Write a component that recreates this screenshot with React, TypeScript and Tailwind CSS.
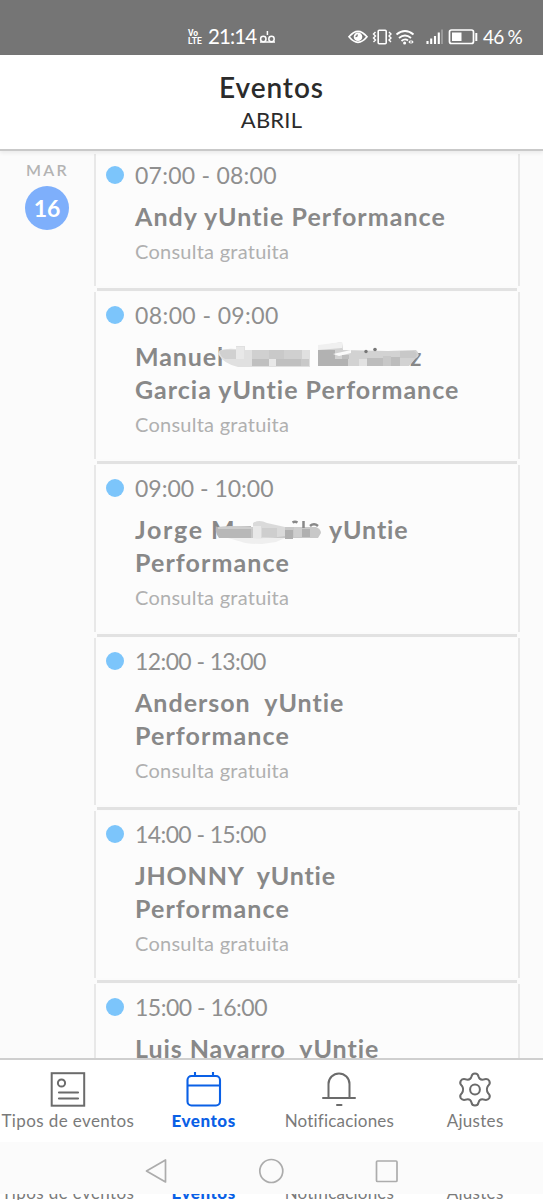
import React from 'react';

function Smudge({ kind }: { kind: 'wide' | 'narrow' }) {
  if (kind === 'wide') {
    return (
      <svg className="absolute left-[218px] top-[24px]" width="210" height="50" viewBox="218 322 210 50">
        <path d="M219 348h6l-1 18h82v-16z" fill="#fcfcfc" />
        <path d="M219 351q6-3 17-2v-3h9v4h65v17h-72q-14-3-20-13z" fill="#e0e0e0" />
        <path d="M219 351q6-2 17-1v9h-11q-5-3-6-8z" fill="#d0d0d0" />
        <path d="M236 347h8v12h-8zM269 359h7v7h-7z" fill="#e8e8e8" />
        <path d="M252 350h17v9h-17zM284 350h18v9h-18z" fill="#d0d0d0" />
        <path d="M252 359h17v7h-17zM276 359h25v7h-25z" fill="#c0c0c0" />
        <path d="M301 359h8v7h-8zM269 350h15v9h-15z" fill="#c9c9c9" />
        <path d="M318 346l24-4 1 8 45 1 28-1q6 5-1 9l-6 7h-91z" fill="#d2d2d2" />
        <path d="M318 345l24-3v6l-24 2z" fill="#f0f0f0" />
        <path d="M318 350h17v9h-17zM318 359h30v7h-30z" fill="#b2b2b2" />
        <path d="M333 354l18-4v3l-12 3z" fill="#fafafa" />
        <path d="M359 359h8v7h-8z" fill="#e2e2e2" />
        <path d="M342 355h7v4h-7zM367 358h16v8h-16zM391 357h9v9h-9z" fill="#bdbdbd" />
        <path d="M383 356h8v10h-8zM400 351h14q5 3 1 7h-15z" fill="#c8c8c8" />
        <circle cx="366" cy="351.5" r="1.7" fill="#777" />
        <circle cx="375" cy="349.5" r="1.8" fill="#777" />
      </svg>
    );
  }
  return (
    <svg className="absolute left-[210px] top-[24px]" width="120" height="50" viewBox="210 495 120 50">
      <path d="M217 528h36v13h-36z" fill="#fcfcfc" />
      <path d="M222 527h94q5 2 5 6l-3 5H222z" fill="#c8c8c8" />
      <path d="M216 527l35-1v12h-32q-4-5-3-11z" fill="#b8b8b8" />
      <path d="M218 527l12-1 23 1v2h-35z" fill="#cdcdcd" />
      <path d="M228 538h57l-9 4-14 2q-16 0-20-2z" fill="#efefef" />
      <path d="M253 523q6-4 14 0l18 4v9q-20 3-32 2z" fill="#dadada" />
      <path d="M253 526h8v12h-8z" fill="#e8e8e8" />
      <path d="M262 528h15v9h-15zM294 527h8v10h-8z" fill="#cecece" />
      <path d="M285 530h8v9h-8zM302 529h8v8h-8z" fill="#b0b0b0" />
      <path d="M292.500 522.500q2.500-1.500 5 0M303.500 521v7M310 526q4-3.500 8 0" fill="none" stroke="#888" strokeWidth="2.500" />
    </svg>
  );
}

type EventItem = {
  time: string;
  timeCls: string;
  lines: { text: React.ReactNode; cls: string }[];
  smudge?: 'wide' | 'narrow';
};

const events: EventItem[] = [
  { time: '07:00 - 08:00', timeCls: 'tracking-[0.25px]', lines: [{ text: 'Andy yUntie Performance', cls: 'tracking-[1.05px]' }] },
  {
    time: '08:00 - 09:00',
    timeCls: 'tracking-[0.4px]',
    lines: [
      { text: <><span className="inline-block w-[275px]">Manuel</span>z</>, cls: 'tracking-[0.9px]' },
      { text: 'Garcia yUntie Performance', cls: 'tracking-[1px]' },
    ],
    smudge: 'wide',
  },
  {
    time: '09:00 - 10:00',
    timeCls: 'tracking-[0px]',
    lines: [
      {
        text: (
          <>
            <span className="inline-block w-[76px] tracking-[1.7px]">Jorge</span>
            <span className="inline-block w-[118px]">M</span>yUntie
          </>
        ),
        cls: 'tracking-[0.9px]',
      },
      { text: 'Performance', cls: 'tracking-[1.1px]' },
    ],
    smudge: 'narrow',
  },
  {
    time: '12:00 - 13:00',
    timeCls: 'tracking-[-0.6px]',
    lines: [
      { text: 'Anderson  yUntie', cls: 'tracking-[1px]' },
      { text: 'Performance', cls: 'tracking-[1.1px]' },
    ],
  },
  {
    time: '14:00 - 15:00',
    timeCls: 'tracking-[-0.6px]',
    lines: [
      { text: 'JHONNY  yUntie', cls: 'tracking-[0.8px]' },
      { text: 'Performance', cls: 'tracking-[1.1px]' },
    ],
  },
  {
    time: '15:00 - 16:00',
    timeCls: 'tracking-[-0.5px]',
    lines: [{ text: 'Luis Navarro  yUntie', cls: 'tracking-[0.95px]' }],
  },
];

function EventCard({ item, first }: { item: EventItem; first: boolean }) {
  return (
    <div className={first ? 'relative h-[138px] shrink-0 pt-[8px]' : 'relative h-[173px] shrink-0 pt-[10px]'}>
      <div className="absolute top-[3px] bottom-[3px] left-[94px] w-[426px] border-x-2 border-[#e8e8e8] bg-[#fcfcfc]" />
      <div className="absolute -bottom-[2px] left-[97px] h-[3px] w-[420px] bg-[#e2e2e2]" />
      <div className="relative flex h-8 items-center pl-[106px]">
        <span className="mr-[11px] size-[18px] rounded-full bg-[#7cc5fb]" />
        <span className={'whitespace-pre text-[23px] text-[#8f8f8f] ' + item.timeCls}>{item.time}</span>
      </div>
      <div className="relative mt-[9px] pl-[135px] text-[25px] leading-[33px] font-bold text-[#888]">
        {item.lines.map((l, i) => (
          <div key={i} className={'h-[33px] whitespace-pre ' + l.cls}>{l.text}</div>
        ))}
      </div>
      {item.lines.length > 1 || first ? (
        <div className="relative pt-px pl-[135px] text-[20px] leading-[35px] tracking-[0.25px] text-[#b0b0b0]">Consulta gratuita</div>
      ) : null}
      {item.smudge && <div className="absolute top-[9px] left-0"><Smudge kind={item.smudge} /></div>}
    </div>
  );
}

function Labels() {
  return (
    <div className="grid grid-cols-4 text-center text-[17px] leading-6 whitespace-nowrap text-[#7a7a7a]">
      <span className="tracking-[0.4px]">Tipos de eventos</span>
      <span className="font-black tracking-[0.5px] text-[#0a60e6]">Eventos</span>
      <span className="tracking-[0.2px]">Notificaciones</span>
      <span className="tracking-[0.3px]">Ajustes</span>
    </div>
  );
}

export default function App() {
  return (
    <div className="flex h-[1200px] w-[543px] flex-col overflow-hidden bg-[#fbfbfb] font-['Lato',sans-serif]">
      <div className="relative flex h-[55px] shrink-0 items-center bg-[#757575] pt-[18px] text-white">
        <div className="ml-[188px] w-[16px] font-['Roboto',sans-serif] text-[8.5px] leading-[8px] font-bold">
          <div>Vo</div>
          <div>LTE</div>
        </div>
        <span className="ml-[4px] w-[48px] text-[20.5px] leading-none tracking-[-0.9px] whitespace-nowrap">21:14</span>
        <svg className="ml-[3px]" width="17" height="16" viewBox="259 29 17 16" fill="none" stroke="#fff" strokeWidth="1.5">
          <circle cx="263.3" cy="39" r="2.7" />
          <circle cx="271.5" cy="39" r="2.7" />
          <path d="M260 42h15M267.4 31v4" />
        </svg>
        <svg className="absolute top-[26px] left-[347px]" width="134" height="22" viewBox="347 26 134 22" fill="none" stroke="#fff">
          <path d="M349 36.8q9-11 18 0q-9 11-18 0z" strokeWidth="1.7" />
          <circle cx="358" cy="36.8" r="4.3" fill="#fff" stroke="none" />
          <path d="M357 34.5q.6 2-1.5 2" stroke="#757575" strokeWidth="1.4" />
          <rect x="378.2" y="30.3" width="8" height="13.5" rx="1" strokeWidth="1.6" />
          <path d="M375.500 32l-2 2 2 2-2 2 2 2-2 2M389 32l2 2-2 2 2 2-2 2 2 2" strokeWidth="1.400" />
          <path d="M396.500 34.500q8.500-7 17 0M399 38q6-5 12 0M401.500 41q3.500-3 6.500-.5" strokeWidth="1.900" />
          <circle cx="404.600" cy="43" r="1.500" fill="#fff" stroke="none" />
          <path d="M410.500 39.700l-2.200 2.200 2.200 2.200zM411.500 39.700l2.200 2.200-2.200 2.200z" fill="#fff" stroke="none" />
          <path d="M427.500 41v3M431.200 38.500v5.500M435 36v8M438.800 32.500v11.500" strokeWidth="2.100" />
          <path d="M442 29.500v14.500" stroke="#a4a4a4" strokeWidth="1.600" />
          <rect x="449.500" y="30" width="24" height="13.500" rx="2" strokeWidth="1.700" />
          <rect x="452" y="32.500" width="9.500" height="8.500" fill="#fff" stroke="none" />
          <path d="M476.300 33v8" strokeWidth="2" />
        </svg>
        <span className="absolute top-[27px] left-[483px] text-[19px] leading-[20px] tracking-[-0.8px] whitespace-nowrap">46 %</span>
      </div>

      <header className="relative z-10 flex h-[96px] shrink-0 flex-col items-center border-b-2 border-[#c9c9c9] bg-white pt-[15px] shadow-[0_2px_4px_rgba(0,0,0,0.07)]">
        <h1 className="text-[28px] leading-[34px] font-semibold tracking-[0.9px] text-[#2b2b2b]">Eventos</h1>
        <p className="mt-px text-[22px] leading-[30px] tracking-[0.2px] text-[#2b2b2b]">ABRIL</p>
      </header>

      <main className="relative h-[907px] shrink-0 overflow-hidden">
        <div className="absolute top-[9px] left-0 z-10 flex w-[94px] flex-col items-center">
          <span className="pl-[1px] text-[16px] leading-5 font-semibold tracking-[2.3px] text-[#b3b3b3]">MAR</span>
          <span className="mt-[6px] flex size-[44px] items-center justify-center rounded-full bg-[#7eaffb] text-[23px] font-bold text-white">16</span>
        </div>
        <div className="flex flex-col">
          {events.map((e, i) => (
            <EventCard key={e.time} item={e} first={i === 0} />
          ))}
        </div>
      </main>

      <nav className="h-[84px] shrink-0 border-t-2 border-[#cfcfcf] bg-white pt-[12px]">
        <div className="grid h-[36px] grid-cols-4 justify-items-center">
          <svg width="36" height="36" viewBox="0 0 36 36" fill="none" stroke="#6b6b6b" strokeWidth="2">
            <rect x="1.700" y="1.200" width="32.500" height="32.500" />
            <circle cx="11.500" cy="11" r="3.600" />
            <path d="M9 20.500h19M9 26.500h19" strokeLinecap="round" strokeWidth="2.200" />
          </svg>
          <svg width="36" height="36" viewBox="0 0 36 36" fill="none" stroke="#0a60e6" strokeWidth="2.100">
            <rect x="1.500" y="4" width="32.500" height="29.500" rx="4" />
            <path d="M2 13.500h32M9 0v4M27 0v4" />
          </svg>
          <svg width="36" height="36" viewBox="0 0 36 36" fill="none" stroke="#6b6b6b" strokeWidth="2" strokeLinecap="round">
            <path d="M2 26h32M7.500 25.500V12a10.500 10.500 0 0 1 21 0v13.500M16 33h4.500" />
          </svg>
          <svg width="36" height="36" viewBox="0 0 36 36" fill="none" stroke="#6b6b6b" strokeWidth="2" strokeLinejoin="round">
            <circle cx="18" cy="17.500" r="4.900" />
            <path d="M14.500 4.500Q15 1.500 18 1.500Q21 1.500 21.500 4.500Q22.500 8.200 26.300 7.600Q30.500 6.200 32.200 8.700Q33.800 11.500 31.200 13.700Q28.500 17.500 31.200 21.300Q33.800 23.500 32.200 26.300Q30.500 28.800 26.300 27.400Q22.500 26.800 21.500 30.500Q21 33.500 18 33.500Q15 33.500 14.500 30.500Q13.500 26.800 9.700 27.400Q5.500 28.800 3.800 26.300Q2.200 23.500 4.800 21.300Q7.500 17.500 4.800 13.700Q2.200 11.500 3.800 8.700Q5.500 6.200 9.700 7.600Q13.500 8.200 14.500 4.500Z" />
          </svg>
        </div>
        <div className="mt-[1px]"><Labels /></div>
      </nav>

      <div className="flex h-[52px] shrink-0 items-center pt-[6px] pl-[144px]">
        <svg width="255" height="28" viewBox="144 1157 255 28" fill="none" stroke="#acacac" strokeWidth="1.700" strokeLinejoin="round">
          <path d="M165.500 1160v22l-19-11z" />
          <circle cx="271.300" cy="1171" r="11.500" />
          <rect x="376.500" y="1161" width="20.500" height="20.500" rx="1" />
        </svg>
      </div>
      <div className="h-[6px] shrink-0 overflow-hidden bg-white">
        <div className="-mt-[13px]"><Labels /></div>
      </div>
    </div>
  );
}
